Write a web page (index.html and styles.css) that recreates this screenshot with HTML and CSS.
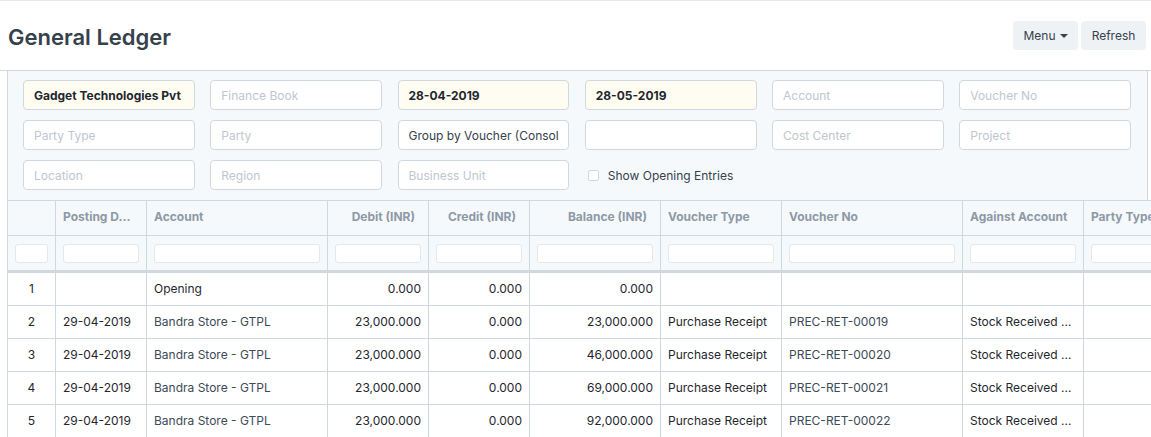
FILE: index.html
```html
<!DOCTYPE html>
<html>
<head>
<meta charset="utf-8">
<link rel="stylesheet" href="styles.css">
</head>
<body>
<div class="page-head">
  <h1 class="title">General Ledger</h1>
  <div class="actions">
    <button class="btn">Menu <span class="caret"></span></button>
    <button class="btn">Refresh</button>
  </div>
</div>
<div class="main">
  <div class="filters">
    <div class="field filled bold">Gadget Technologies Pvt</div>
    <div class="field ph">Finance Book</div>
    <div class="field filled bold">28-04-2019</div>
    <div class="field filled bold">28-05-2019</div>
    <div class="field ph">Account</div>
    <div class="field ph">Voucher No</div>
    <div class="field ph">Party Type</div>
    <div class="field ph">Party</div>
    <div class="field">Group by Voucher (Consol</div>
    <div class="field"></div>
    <div class="field ph">Cost Center</div>
    <div class="field ph">Project</div>
    <div class="field ph">Location</div>
    <div class="field ph">Region</div>
    <div class="field ph">Business Unit</div>
    <label class="check"><span class="box"></span>Show Opening Entries</label>
  </div>
  <div class="table">
    <div class="row head">
      <div class="cell"></div>
      <div class="cell">Posting D...</div>
      <div class="cell">Account</div>
      <div class="cell num">Debit (INR)</div>
      <div class="cell num">Credit (INR)</div>
      <div class="cell num">Balance (INR)</div>
      <div class="cell">Voucher Type</div>
      <div class="cell">Voucher No</div>
      <div class="cell">Against Account</div>
      <div class="cell">Party Type</div>
    </div>
    <div class="row filter-row">
      <div class="cell"><span class="fi"></span></div>
      <div class="cell"><span class="fi"></span></div>
      <div class="cell"><span class="fi"></span></div>
      <div class="cell"><span class="fi"></span></div>
      <div class="cell"><span class="fi"></span></div>
      <div class="cell"><span class="fi"></span></div>
      <div class="cell"><span class="fi"></span></div>
      <div class="cell"><span class="fi"></span></div>
      <div class="cell"><span class="fi"></span></div>
      <div class="cell"><span class="fi"></span></div>
    </div>
    <div class="row data">
      <div class="cell idx">1</div>
      <div class="cell"></div>
      <div class="cell">Opening</div>
      <div class="cell num">0.000</div>
      <div class="cell num">0.000</div>
      <div class="cell num">0.000</div>
      <div class="cell"></div>
      <div class="cell"></div>
      <div class="cell"></div>
      <div class="cell"></div>
    </div>
    <div class="row data">
      <div class="cell idx">2</div>
      <div class="cell">29-04-2019</div>
      <div class="cell link">Bandra Store - GTPL</div>
      <div class="cell num">23,000.000</div>
      <div class="cell num">0.000</div>
      <div class="cell num">23,000.000</div>
      <div class="cell">Purchase Receipt</div>
      <div class="cell link">PREC-RET-00019</div>
      <div class="cell">Stock Received ...</div>
      <div class="cell"></div>
    </div>
    <div class="row data">
      <div class="cell idx">3</div>
      <div class="cell">29-04-2019</div>
      <div class="cell link">Bandra Store - GTPL</div>
      <div class="cell num">23,000.000</div>
      <div class="cell num">0.000</div>
      <div class="cell num">46,000.000</div>
      <div class="cell">Purchase Receipt</div>
      <div class="cell link">PREC-RET-00020</div>
      <div class="cell">Stock Received ...</div>
      <div class="cell"></div>
    </div>
    <div class="row data">
      <div class="cell idx">4</div>
      <div class="cell">29-04-2019</div>
      <div class="cell link">Bandra Store - GTPL</div>
      <div class="cell num">23,000.000</div>
      <div class="cell num">0.000</div>
      <div class="cell num">69,000.000</div>
      <div class="cell">Purchase Receipt</div>
      <div class="cell link">PREC-RET-00021</div>
      <div class="cell">Stock Received ...</div>
      <div class="cell"></div>
    </div>
    <div class="row data">
      <div class="cell idx">5</div>
      <div class="cell">29-04-2019</div>
      <div class="cell link">Bandra Store - GTPL</div>
      <div class="cell num">23,000.000</div>
      <div class="cell num">0.000</div>
      <div class="cell num">92,000.000</div>
      <div class="cell">Purchase Receipt</div>
      <div class="cell link">PREC-RET-00022</div>
      <div class="cell">Stock Received ...</div>
      <div class="cell"></div>
    </div>
  </div>
</div>
</body>
</html>
```
FILE: styles.css
```css
* { box-sizing: border-box; }
html, body { margin: 0; padding: 0; }
body {
  font-family: Inter, "Noto Sans", "Liberation Sans", sans-serif;
  color: #1f272e;
  background: #fff;
  width: 1151px;
  height: 437px;
  overflow: hidden;
}
.page-head {
  height: 71px;
  border-top: 1px solid #e6eaee;
  border-bottom: 1px solid #d1d8dd;
  display: flex;
  align-items: center;
  justify-content: space-between;
  padding: 0 5px 0 8px;
}
.title {
  margin: 0;
  font-size: 22px;
  font-weight: 600;
  color: #36414c;
  position: relative;
  top: 1px;
}
.actions { display: flex; gap: 3px; }
.btn {
  font-family: inherit;
  height: 29px;
  width: 65px;
  border: none;
  border-radius: 4px;
  background: #eef2f5;
  color: #36414c;
  font-size: 12px;
  padding: 0;
  display: flex;
  align-items: center;
  justify-content: center;
  gap: 4px;
}
.caret {
  width: 0; height: 0;
  border-left: 4px solid transparent;
  border-right: 4px solid transparent;
  border-top: 4px solid #36414c;
}
.main {
  margin-left: 7px;
  border-left: 1px solid #d1d8dd;
}
.filters {
  width: 1140px;
  border-right: 1px solid #d1d8dd;
  background: #f6f9fc;
  padding: 9px 16px 10px 15px;
  display: grid;
  grid-template-columns: repeat(6, 1fr);
  column-gap: 15.5px;
  row-gap: 10px;
}
.field {
  height: 30px;
  border: 1px solid #d1d8dd;
  border-radius: 4px;
  background: #fff;
  font-size: 12px;
  color: #36414c;
  padding: 0 10px;
  display: flex;
  align-items: center;
  white-space: nowrap;
  overflow: hidden;
}
.field.filled { background: #fffdf2; }
.field.bold { font-weight: 700; color: #1f272e; }
.field.ph { color: #c0c7ce; }
.check {
  display: flex;
  align-items: center;
  font-size: 12px;
  color: #36414c;
  padding-left: 3px;
}
.box {
  width: 11px; height: 11px;
  border: 1px solid #d1d8dd;
  border-radius: 2px;
  background: #fff;
  margin-right: 9px;
}
.table {
  border-top: 1px solid #d1d8dd;
  width: 1260px;
}
.row {
  display: grid;
  grid-template-columns: 48px 91px 181px 101px 101px 131px 121px 181px 121px 121px;
  border-bottom: 1px solid #d1d8dd;
}
.cell {
  border-right: 1px solid #d1d8dd;
  padding: 0 7px;
  display: flex;
  align-items: center;
  white-space: nowrap;
  overflow: hidden;
}
.cell.num { justify-content: flex-end; }
.head { height: 35px; background: #f6f9fc; }
.head .cell {
  font-size: 12px;
  font-weight: 700;
  color: #8d99a6;
  padding-bottom: 3px;
}
.head .cell.num { padding-right: 13px; }
.filter-row {
  height: 37px;
  background: #f6f9fc;
  border-bottom: 3px solid #d1d8dd;
}
.filter-row .cell { padding: 0 7px; }
.fi {
  display: block;
  width: 100%;
  height: 19px;
  background: #fff;
  border: 1px solid #e3e8ec;
  border-radius: 3px;
}
.data { height: 33px; }
.data .cell {
  font-size: 12px;
  color: #1f272e;
  padding-bottom: 2px;
}
.data .cell.num { padding-right: 7px; }
.data .cell.idx { justify-content: center; }
.data .cell.link { color: #3d4a57; }
```
